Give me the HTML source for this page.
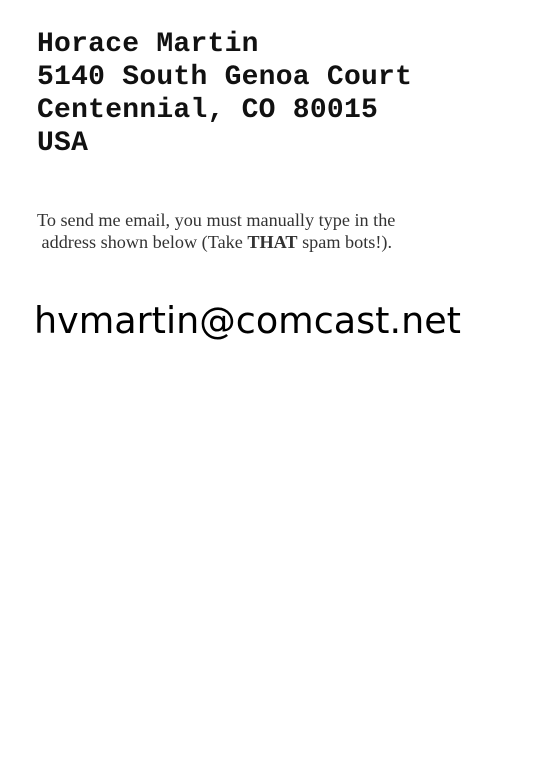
<!DOCTYPE html>
<html><head><meta charset="utf-8"><style>
html,body{margin:0;padding:0;background:#fff;width:559px;height:768px;overflow:hidden;position:relative}
.a{position:absolute;left:37px;top:28px;font:bold 28px/33px "Liberation Mono",monospace;letter-spacing:0.25px;color:#111;white-space:pre;margin:0}
.t{position:absolute;left:37px;top:209px;font:18.2px/22px "Liberation Serif",serif;color:#333;white-space:nowrap}
.e{position:absolute;left:34px;top:299px;font:36.5px/44px "DejaVu Sans",sans-serif;color:#000;white-space:nowrap}
</style></head><body>
<pre class="a">Horace Martin
5140 South Genoa Court
Centennial, CO 80015
USA</pre>
<div class="t">To send me email, you must manually type in the<br>&nbsp;address shown below (Take <b>THAT</b> spam bots!).</div>
<div class="e">hvmartin@comcast.net</div>
</body></html>
